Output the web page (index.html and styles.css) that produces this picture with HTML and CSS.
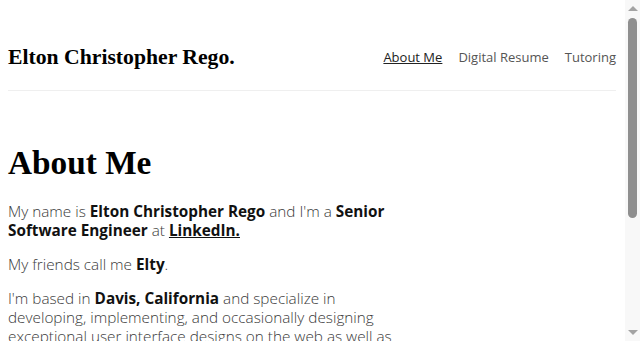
FILE: index.html
```html
<!DOCTYPE html>
<html lang="en">
<head>
<meta charset="utf-8">
<title>Elton Christopher Rego</title>
<link rel="stylesheet" href="styles.css">
</head>
<body>
<div class="page">
  <header class="site-header">
    <a class="brand" href="#">Elton Christopher Rego.</a>
    <nav class="nav">
      <a class="nav-link active" href="#">About Me</a>
      <a class="nav-link" href="#">Digital Resume</a>
      <a class="nav-link" href="#">Tutoring</a>
    </nav>
  </header>
  <main class="content">
    <h1 class="title">About Me</h1>
    <p>My name is <b>Elton Christopher Rego</b> and I'm a <b>Senior Software Engineer</b> at <a class="link" href="#">LinkedIn.</a></p>
    <p>My friends call me <b>Elty</b>.</p>
    <p>I'm based in <b>Davis, California</b> and specialize in developing, implementing, and occasionally designing exceptional user interface designs on the web as well as mobile applications. I enjoy building things that live on the internet.</p>
    <p>When I'm not coding, I like to spend time with friends and family, read books, and explore the outdoors.</p>
  </main>
</div>
<div class="scrollbar" aria-hidden="true">
  <span class="arrow up"></span>
  <span class="thumb"></span>
  <span class="arrow down"></span>
</div>
</body>
</html>
```
FILE: styles.css
```css
html, body {
  margin: 0;
  padding: 0;
  background: #fff;
  overflow: hidden;
}
body {
  font-family: "Open Sans", "Lato", sans-serif;
  color: #333;
}
.page {
  margin-right: 15px;
}
.site-header {
  margin: 0 9px 0 8px;
  height: 91px;
  display: flex;
  align-items: center;
  justify-content: space-between;
  border-bottom: 1px solid #efefef;
  box-sizing: border-box;
  padding-top: 24px;
}
.brand {
  font-family: "Liberation Serif", serif;
  font-weight: 700;
  font-size: 21.7px;
  color: #000;
  text-decoration: none;
}
.nav {
  display: flex;
  gap: 16px;
}
.nav-link {
  font-size: 13px;
  color: #555;
  text-decoration: none;
}
.nav-link.active {
  color: #222;
  text-decoration: underline;
}
.content {
  margin: 0 8px;
  max-width: 405px;
  padding-top: 52px;
}
.title {
  font-family: "Liberation Serif", serif;
  font-weight: 900;
  font-size: 33.3px;
  color: #000;
  margin: 0 0 19px;
  line-height: 40px;
}
p {
  font-size: 15.3px;
  font-weight: 300;
  line-height: 19px;
  margin: 0 0 15px;
  color: #3a3a3a;
}
b {
  font-weight: 700;
  color: #111;
}
.link {
  color: #111;
  font-weight: 700;
}
.scrollbar {
  position: fixed;
  top: 0;
  right: 0;
  width: 15px;
  height: 100%;
  background: #f8f8f8;
  display: flex;
  flex-direction: column;
  align-items: center;
}
.arrow {
  width: 0;
  height: 0;
  border-left: 5px solid transparent;
  border-right: 5px solid transparent;
}
.arrow.up {
  margin-top: 6px;
  border-bottom: 5px solid #a3a3a3;
}
.arrow.down {
  margin-top: auto;
  margin-bottom: 6px;
  border-top: 5px solid #a3a3a3;
}
.thumb {
  margin-top: 7px;
  width: 9px;
  height: 200px;
  border-radius: 5px;
  background: #8f8f8f;
}
```
